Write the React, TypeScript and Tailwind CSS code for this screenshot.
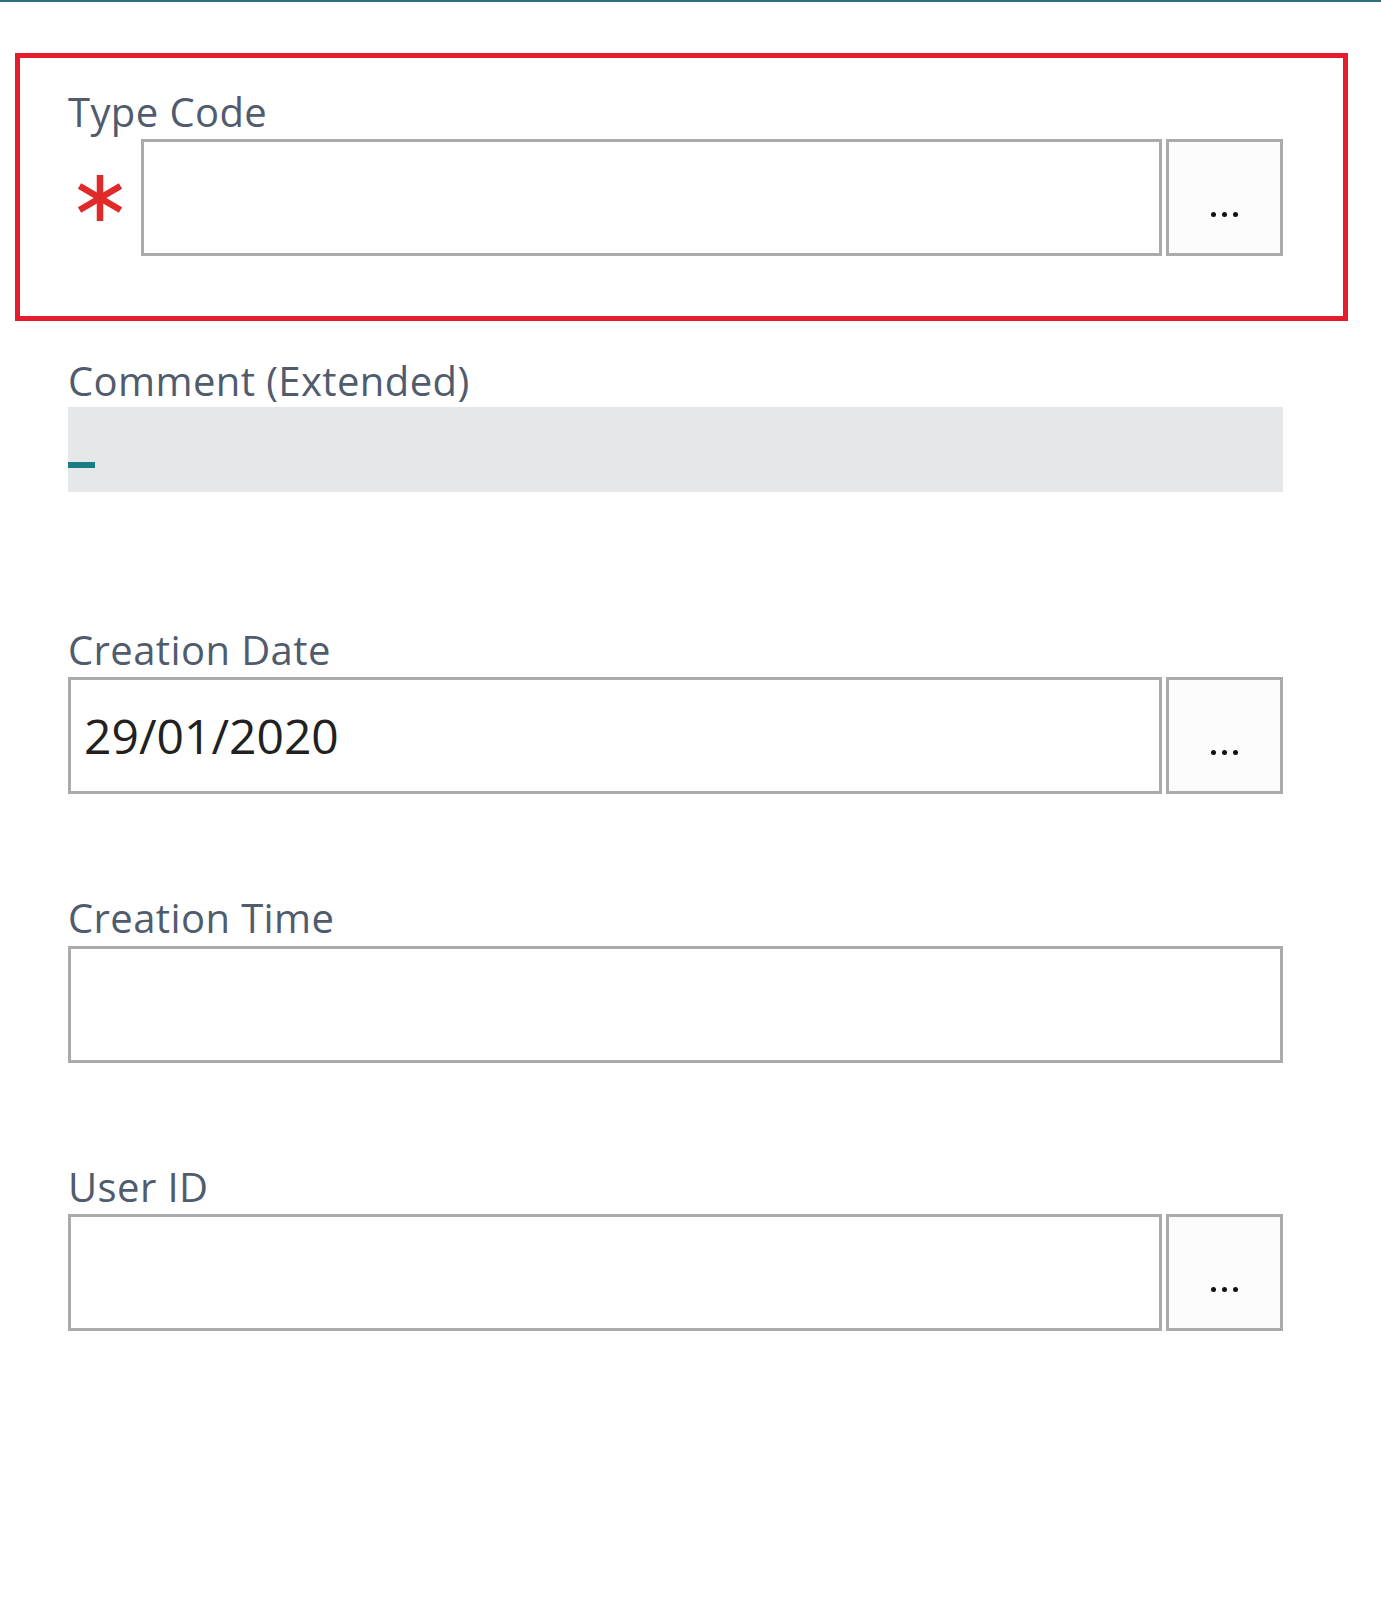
import React from "react";

const labelCls =
  "block text-[40px] leading-[48px] text-[#505c6d] tracking-[0.4px] whitespace-nowrap";

function Dots() {
  return (
    <div className="flex h-full w-full items-center justify-center">
      <div className="mt-[34px] flex gap-[6px]">
        <span className="block h-[5px] w-[5px] rounded-full bg-[#111]" />
        <span className="block h-[5px] w-[5px] rounded-full bg-[#111]" />
        <span className="block h-[5px] w-[5px] rounded-full bg-[#111]" />
      </div>
    </div>
  );
}

function LookupButton() {
  return (
    <div className="ml-[4px] h-[117px] w-[117px] shrink-0 border-[3px] border-[#ababab] bg-[#fcfcfc]">
      <Dots />
    </div>
  );
}

function Asterisk() {
  return (
    <svg width="48" height="48" viewBox="0 0 48 48" className="block">
      <g stroke="#e02a2a" strokeWidth="6.5" strokeLinecap="butt">
        <line x1="24" y1="1" x2="24" y2="47" />
        <line x1="3.5" y1="12" x2="44.5" y2="36" />
        <line x1="3.5" y1="36" x2="44.5" y2="12" />
      </g>
    </svg>
  );
}

export default function App() {
  return (
    <div
      className="relative min-h-[1600px] w-full bg-white"
      style={{ fontFamily: '"Open Sans", "Noto Sans", sans-serif' }}
    >
      <div className="h-[2px] w-full bg-[#2f6f7f]" />
      {/* Type Code highlighted */}
      <div className="ml-[15px] mt-[51px] h-[268px] w-[1333px] border-[5px] border-[#e31d2b] pl-[48px] pt-[30px]">
        <span className={labelCls}>Type Code</span>
        <div className="mt-[3px] flex w-[1215px] items-center">
          <div className="flex w-[73px] shrink-0 items-center pl-[8px]">
            <Asterisk />
          </div>
          <div className="h-[117px] flex-1 border-[3px] border-[#ababab] bg-white" />
          <LookupButton />
        </div>
      </div>

      <div className="ml-[68px] w-[1215px]">
        {/* Comment */}
        <div className="mt-[36px]">
          <span className={labelCls}>Comment (Extended)</span>
          <div className="mt-[2px] flex h-[85px] flex-col justify-end bg-[#e6e7e8] pb-[24px]">
            <div className="h-[6px] w-[27px] bg-[#1a7c86]" />
          </div>
        </div>

        {/* Creation Date */}
        <div className="mt-[134px]">
          <span className={labelCls}>Creation Date</span>
          <div className="mt-[3px] flex">
            <div className="flex h-[117px] flex-1 items-center border-[3px] border-[#ababab] bg-white pl-[13px]">
              <span className="text-[48px] leading-none text-[#212121]">29/01/2020</span>
            </div>
            <LookupButton />
          </div>
        </div>

        {/* Creation Time */}
        <div className="mt-[100px]">
          <span className={labelCls}>Creation Time</span>
          <div className="mt-[4px] h-[117px] border-[3px] border-[#ababab] bg-white" />
        </div>

        {/* User ID */}
        <div className="mt-[100px]">
          <span className={labelCls}>User ID</span>
          <div className="mt-[3px] flex">
            <div className="h-[117px] flex-1 border-[3px] border-[#ababab] bg-white" />
            <LookupButton />
          </div>
        </div>
      </div>
    </div>
  );
}
